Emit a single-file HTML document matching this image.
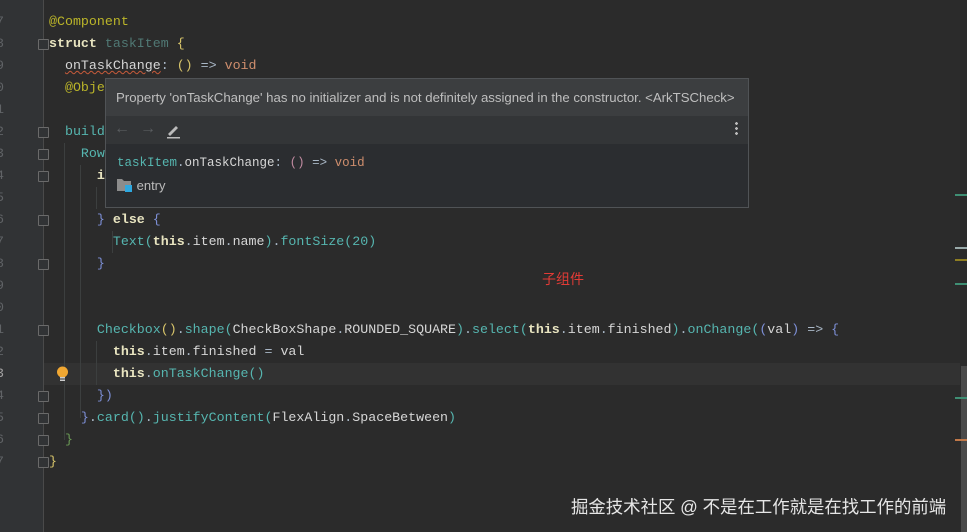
<!DOCTYPE html>
<html><head><meta charset="utf-8"><style>
body{margin:0;width:967px;height:532px;overflow:hidden;background:#2b2b2b;position:relative;font-family:"Liberation Mono",monospace;}
.gut{position:absolute;left:0;top:0;width:43px;height:532px;background:#313335;border-right:1px solid #4a4a4a;}
.ln{position:absolute;left:-4px;font-size:13.3px;color:#606366;line-height:22px;}
.cur{position:absolute;left:44px;top:363px;width:916px;height:22px;background:#323232;}
.code{position:absolute;left:49px;top:11px;font-size:13.3px;line-height:22px;color:#a9b7c6;white-space:pre;}
.y{color:#bbb529}.k{color:#e8e4c0;font-weight:bold}.g{color:#507874}.o{color:#cf8e6d}.t{color:#56b6b0}.w{color:#d6d6d6}.p1{color:#d7c46a}.p2{color:#7d8fd6}.p3{color:#56b6b0}.gr{color:#6a9955}
.sq{text-decoration:underline wavy #c75b3a;text-decoration-thickness:1px}
.fold{position:absolute;left:38px;width:9px;height:9px;border:1px solid #6a6a6a;border-radius:1px;background:#313335}
.guide{position:absolute;width:1px;background:#3c3f3f}
.pop{position:absolute;left:105px;top:78px;width:642px;height:128px;border:1px solid #505356;background:#2b2d30;font-family:"Liberation Sans",sans-serif;}
.ph{height:37px;background:#3c3e40;color:#bfbfbf;font-size:13.2px;line-height:37px;padding-left:10px;}
.pt{height:28px;background:#333537;position:relative}
.pc{padding:12px 0 0 11px;font-family:"Liberation Mono",monospace;font-size:12.5px;color:#a9b7c6}
.mk{position:absolute;right:0;width:12px;height:2px}
</style></head><body>
<div class="gut">
<div class="ln" style="top:11px">7</div><div class="ln" style="top:33px">8</div><div class="ln" style="top:55px">9</div><div class="ln" style="top:77px">0</div><div class="ln" style="top:99px">1</div><div class="ln" style="top:121px">2</div><div class="ln" style="top:143px">3</div><div class="ln" style="top:165px">4</div><div class="ln" style="top:187px">5</div><div class="ln" style="top:209px">6</div><div class="ln" style="top:231px">7</div><div class="ln" style="top:253px">8</div><div class="ln" style="top:275px">9</div><div class="ln" style="top:297px">0</div><div class="ln" style="top:319px">1</div><div class="ln" style="top:341px">2</div><div class="ln" style="top:363px;color:#a4a3a3">3</div><div class="ln" style="top:385px">4</div><div class="ln" style="top:407px">5</div><div class="ln" style="top:429px">6</div><div class="ln" style="top:451px">7</div>
</div>
<div class="cur"></div>
<div class="fold" style="top:39px"></div><div class="fold" style="top:127px"></div><div class="fold" style="top:149px"></div><div class="fold" style="top:171px"></div><div class="fold" style="top:215px"></div><div class="fold" style="top:259px"></div><div class="fold" style="top:325px"></div><div class="fold" style="top:391px"></div><div class="fold" style="top:413px"></div><div class="fold" style="top:435px"></div><div class="fold" style="top:457px"></div>
<div class="guide" style="left:64px;top:143px;height:297px"></div>
<div class="guide" style="left:80px;top:165px;height:253px"></div>
<div class="guide" style="left:96px;top:187px;height:22px"></div>
<div class="guide" style="left:112px;top:231px;height:22px"></div>
<div class="guide" style="left:96px;top:341px;height:44px"></div>
<div class="code"><span class="y">@Component</span>
<span class="k">struct</span> <span class="g">taskItem</span> <span class="p1">{</span>
  <span class="sq w">onTaskChange</span>: <span class="p1">()</span> => <span class="o">void</span>
  <span class="y">@Obje</span>

  <span class="t">build</span>
    <span class="t">Row</span>
      <span class="k">i</span>

      <span class="p2">}</span> <span class="k">else</span> <span class="p2">{</span>
        <span class="t">Text</span><span class="p3">(</span><span class="k">this</span>.<span class="w">item</span>.<span class="w">name</span><span class="p3">)</span>.<span class="t">fontSize</span><span class="p3">(</span><span class="t">20</span><span class="p3">)</span>
      <span class="p2">}</span>


      <span class="t">Checkbox</span><span class="p1">()</span>.<span class="t">shape</span><span class="p3">(</span><span class="w">CheckBoxShape</span>.<span class="w">ROUNDED_SQUARE</span><span class="p3">)</span>.<span class="t">select</span><span class="p3">(</span><span class="k">this</span>.<span class="w">item</span>.<span class="w">finished</span><span class="p3">)</span>.<span class="t">onChange</span><span class="p3">(</span><span class="p2">(</span><span class="w">val</span><span class="p2">)</span> => <span class="p2">{</span>
        <span class="k">this</span>.<span class="w">item</span>.<span class="w">finished</span> = <span class="w">val</span>
        <span class="k">this</span>.<span class="t">onTaskChange</span><span class="p3">()</span>
      <span class="p2">})</span>
    <span class="p2">}</span>.<span class="t">card</span><span class="p3">()</span>.<span class="t">justifyContent</span><span class="p3">(</span><span class="w">FlexAlign</span>.<span class="w">SpaceBetween</span><span class="p3">)</span>
  <span class="gr">}</span>
<span class="p1">}</span></div>
<svg style="position:absolute;left:56px;top:366px" width="13" height="16"><circle cx="6.5" cy="6" r="5.5" fill="#f0a732"/><rect x="4" y="11" width="5" height="1.5" fill="#ccc"/><rect x="4" y="13.5" width="5" height="1.5" fill="#ccc"/></svg>
<div class="pop">
<div class="ph">Property 'onTaskChange' has no initializer and is not definitely assigned in the constructor. &lt;ArkTSCheck&gt;</div>
<div class="pt">
<span style="position:absolute;left:8px;top:4px;color:#5a5d60;font-size:16px">←</span>
<span style="position:absolute;left:34px;top:4px;color:#5a5d60;font-size:16px">→</span>
<svg style="position:absolute;left:60px;top:7px" width="16" height="16"><path d="M2 11 L10 3 L12 5 L4 13 Z" fill="#bbb"/><rect x="1" y="14" width="13" height="1.5" fill="#bbb"/></svg>
<span style="position:absolute;right:10px;top:5px;width:3px;height:14px;background:radial-gradient(circle,#bbb 1.3px,transparent 1.5px) 0 0/3px 5px repeat-y"></span>
</div>
<div class="pc"><span class="t">taskItem</span>.<span class="w">onTaskChange</span>: <span style="color:#c08aa0">()</span> => <span class="o">void</span></div>
<div style="padding:8px 0 0 11px;font-size:13px;color:#bbb;position:relative"><svg width="16" height="14" style="vertical-align:-2px"><path d="M0 1h5l2 2h7v10H0z" fill="#8c8c8c"/><rect x="8" y="7" width="7" height="7" fill="#2ea8e0"/></svg> entry</div>
</div>
<div style="position:absolute;left:542px;top:269px;color:#e23b36;font-size:14px;font-family:'Liberation Sans','Noto Sans CJK SC',sans-serif">子组件</div>
<div class="mk" style="top:194px;background:#3f8f74"></div>
<div class="mk" style="top:247px;background:#9aa"></div>
<div class="mk" style="top:259px;background:#8f7e22"></div>
<div class="mk" style="top:283px;background:#3f8f74"></div>
<div style="position:absolute;left:961px;top:366px;width:6px;height:166px;background:#4a4a4a"></div>
<div class="mk" style="top:397px;background:#3f8f74"></div>
<div class="mk" style="top:439px;background:#c07848"></div>
<div style="position:absolute;left:571px;top:494px;color:#e6e6e6;font-size:17.4px;font-family:'Liberation Sans','Noto Sans CJK SC',sans-serif">掘金技术社区 @ 不是在工作就是在找工作的前端</div>
</body></html>
